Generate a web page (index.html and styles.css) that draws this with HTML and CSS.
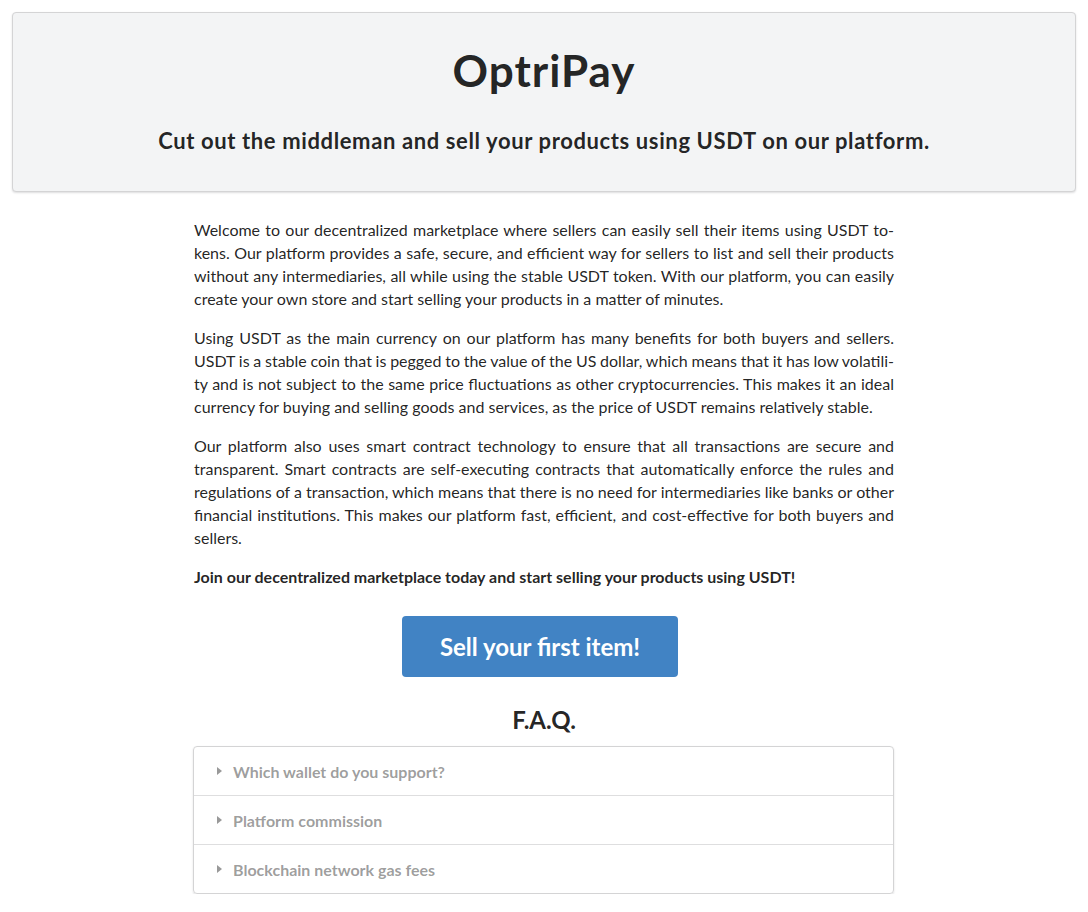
FILE: index.html
```html
<!DOCTYPE html>
<html lang="en">
<head>
<meta charset="utf-8">
<title>OptriPay</title>
<link rel="stylesheet" href="styles.css">
</head>
<body>
<header class="hero">
  <h1 class="hero-title">OptriPay</h1>
  <h2 class="hero-sub">Cut out the middleman and sell your products using USDT on our platform.</h2>
</header>
<main class="content">
  <p><span class="ln">Welcome to our decentralized marketplace where sellers can easily sell their items using USDT to-</span><span class="ln">kens. Our platform provides a safe, secure, and efficient way for sellers to list and sell their products</span><span class="ln">without any intermediaries, all while using the stable USDT token. With our platform, you can easily</span><span class="ln last">create your own store and start selling your products in a matter of minutes.</span></p>
  <p><span class="ln">Using USDT as the main currency on our platform has many benefits for both buyers and sellers.</span><span class="ln">USDT is a stable coin that is pegged to the value of the US dollar, which means that it has low volatili-</span><span class="ln">ty and is not subject to the same price fluctuations as other cryptocurrencies. This makes it an ideal</span><span class="ln last">currency for buying and selling goods and services, as the price of USDT remains relatively stable.</span></p>
  <p><span class="ln">Our platform also uses smart contract technology to ensure that all transactions are secure and</span><span class="ln">transparent. Smart contracts are self-executing contracts that automatically enforce the rules and</span><span class="ln">regulations of a transaction, which means that there is no need for intermediaries like banks or other</span><span class="ln">financial institutions. This makes our platform fast, efficient, and cost-effective for both buyers and</span><span class="ln last">sellers.</span></p>
  <p class="strong">Join our decentralized marketplace today and start selling your products using USDT!</p>
  <div class="cta-wrap"><button class="cta">Sell your first item!</button></div>
  <h3 class="faq-title">F.A.Q.</h3>
  <div class="accordion">
    <div class="acc-row"><span class="tri"></span>Which wallet do you support?</div>
    <div class="acc-row"><span class="tri"></span>Platform commission</div>
    <div class="acc-row"><span class="tri"></span>Blockchain network gas fees</div>
  </div>
</main>
</body>
</html>
```
FILE: styles.css
```css
html, body {
  margin: 0;
  padding: 0;
}
body {
  font-family: Lato, "Helvetica Neue", Arial, sans-serif;
  color: rgba(0, 0, 0, 0.87);
  background: #fff;
  padding: 12px 12px 0;
}
.hero {
  background: #f3f4f5;
  border: 1px solid #d4d4d5;
  border-radius: 4px;
  box-shadow: 0 1px 2px rgba(34, 36, 38, 0.15);
  text-align: center;
  padding: 31px 16px 37px;
}
.hero-title {
  margin: 0;
  font-size: 44px;
  font-weight: 700;
  letter-spacing: 1px;
  line-height: 53px;
}
.hero-sub {
  margin: 31px 0 0;
  font-size: 22px;
  font-weight: 700;
  letter-spacing: 0.62px;
  line-height: 26px;
}
.content {
  width: 700px;
  margin: 0 auto;
  padding-top: 26px;
  font-size: 16px;
  line-height: 23px;
}
.content p {
  margin: 0 0 16px;
}
.ln {
  display: block;
  white-space: nowrap;
  word-spacing: -1px;
  text-align: justify;
  text-align-last: justify;
}
.ln.last {
  text-align: left;
  text-align-last: left;
  word-spacing: 0;
}
.content p.strong {
  font-weight: 700;
}
.cta-wrap {
  display: flex;
  justify-content: center;
  margin-top: 28px;
}
.cta {
  font-family: Lato, "Helvetica Neue", Arial, sans-serif;
  font-size: 24px;
  font-weight: 700;
  line-height: 24px;
  color: #fff;
  background: #4183c4;
  border: none;
  border-radius: 4px;
  padding: 19px 38px 18px;
  margin-right: 8px;
  cursor: pointer;
}
.faq-title {
  margin: 29px 0 0;
  text-align: center;
  font-size: 24px;
  font-weight: 700;
  line-height: 28px;
}
.accordion {
  margin: 12px 0 0 -1px;
  border: 1px solid #d4d4d5;
  border-radius: 4px;
  box-shadow: 0 1px 2px rgba(34, 36, 38, 0.15);
}
.acc-row {
  display: flex;
  align-items: center;
  height: 48px;
  padding: 0 19px;
  font-size: 16px;
  font-weight: 700;
  color: rgba(0, 0, 0, 0.4);
}
.acc-row + .acc-row {
  border-top: 1px solid rgba(34, 36, 38, 0.15);
}
.tri {
  width: 0;
  height: 0;
  border-top: 4px solid transparent;
  border-bottom: 4px solid transparent;
  border-left: 5px solid rgba(0, 0, 0, 0.4);
  margin: 0 11px 0 4px;
}
```
